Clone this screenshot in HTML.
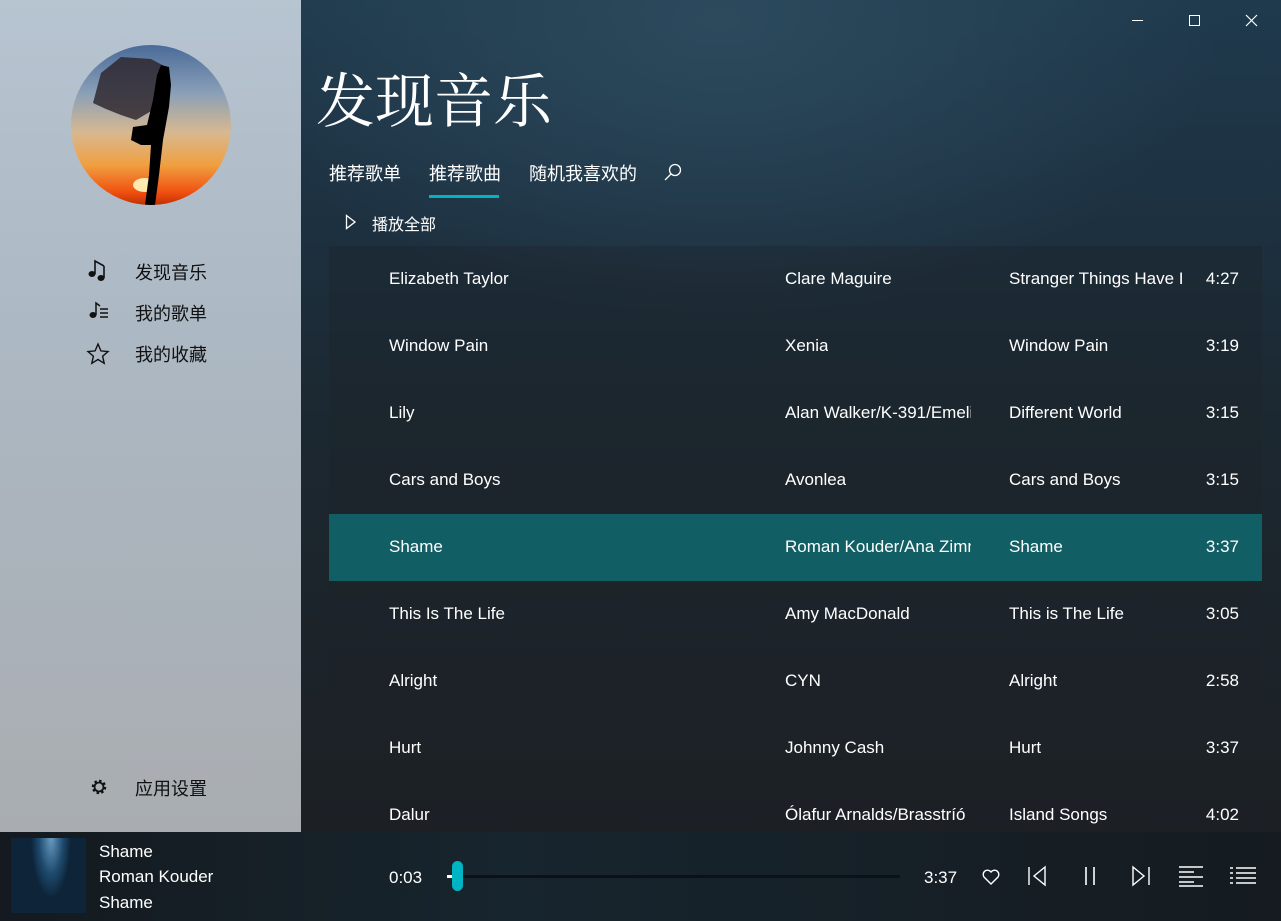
<!DOCTYPE html>
<html><head><meta charset="utf-8"><style>
*{margin:0;padding:0;box-sizing:border-box}
body{width:1281px;height:921px;overflow:hidden;position:relative;font-family:"Liberation Sans","Noto Sans CJK SC",sans-serif;background:#1c2126}
.side{position:absolute;left:0;top:0;width:301px;height:832px;background:linear-gradient(180deg,#b7c4d1 0%,#acb8c3 40%,#a9adb1 100%)}
.main{position:absolute;left:301px;top:0;width:980px;height:832px;background:radial-gradient(ellipse 500px 300px at 420px 20px,#2c4a5d 0%,rgba(30,56,75,0) 100%),linear-gradient(180deg,#1f3a4d 0%,#1d3141 25%,#1c2831 50%,#1c2024 100%)}
.avatar{position:absolute;left:71px;top:45px;width:160px;height:160px;border-radius:50%;background:linear-gradient(180deg,#4a6a98 0%,#8aa0b8 30%,#d8b890 55%,#f0a040 75%,#f05010 92%,#c03000 100%);overflow:hidden}
.nav{position:absolute;left:135px;font-size:18px;color:#111}
.ic{position:absolute;left:86px}
h1{position:absolute;left:316px;top:54px;font-family:"Noto Serif CJK SC",serif;font-weight:400;font-size:59px;color:#fff}
.tab{position:absolute;top:160px;font-size:18px;color:#fff}
.row{position:absolute;left:329px;width:933px;height:67px;color:#fff;font-size:17px}
.row span{position:absolute;top:23px;white-space:nowrap;overflow:hidden}
.row span.t{right:23px;text-align:right}
.bar{position:absolute;left:0;top:832px;width:1281px;height:89px;background:linear-gradient(90deg,#141a1f,#17252e 40%,#151b20 100%)}
.bt{position:absolute;color:#fff;font-size:17px}
</style></head><body>
<div class="side">
<div class="avatar"><svg width="160" height="160"><ellipse cx="74" cy="140" rx="12" ry="7" fill="#fff8c0" opacity=".9"/><path d="M22 58 L30 28 L50 12 L80 14 L95 22 L92 40 L82 65 L65 75 L50 70 L35 64Z" fill="#2a2228" opacity=".8"/><path d="M90 20 L98 22 L100 40 L98 62 L92 95 L88 130 L84 160 L74 160 L78 130 L80 100 L70 100 L60 95 L62 82 L76 80 L82 55 L86 30Z" fill="#000"/></svg></div>
<svg class="ic" style="top:258px" width="24" height="24"><ellipse cx="6" cy="16" rx="3.5" ry="3" fill="#111"/><ellipse cx="15" cy="20" rx="3.5" ry="3" fill="#111"/><path d="M9 16V3l9 5M18 20V8" stroke="#111" stroke-width="1.6" fill="none"/></svg>
<div class="nav" style="top:259px">发现音乐</div>
<svg class="ic" style="top:300px" width="24" height="22"><ellipse cx="7" cy="15" rx="3.5" ry="3" fill="#111"/><path d="M10 15V3l4 3M14 9h8M14 13h8M14 17h8" stroke="#111" stroke-width="1.5" fill="none"/></svg>
<div class="nav" style="top:300px">我的歌单</div>
<svg class="ic" style="top:342px" width="24" height="24"><path d="M12 2l2.9 6.9 7.1.6-5.4 4.7 1.6 7.1L12 17.5 5.8 21.3l1.6-7.1L2 9.5l7.1-.6Z" fill="none" stroke="#111" stroke-width="1.4"/></svg>
<div class="nav" style="top:341px">我的收藏</div>
<svg class="ic" style="top:777px;left:89px" width="20" height="20"><circle cx="10" cy="10" r="5.5" fill="none" stroke="#111" stroke-width="3.5" stroke-dasharray="2.2 2.1"/><circle cx="10" cy="10" r="4.5" fill="none" stroke="#111" stroke-width="1.8"/></svg>
<div class="nav" style="top:775px">应用设置</div>
</div>
<div class="main"></div>
<div style="position:absolute;left:1132px;top:20px;width:11px;height:1px;background:#fff"></div>
<div style="position:absolute;left:1189px;top:15px;width:11px;height:11px;border:1px solid #fff"></div>
<svg style="position:absolute;left:1245px;top:14px" width="13" height="13" stroke="#fff" stroke-width="1.2"><path d="M1 1L12 12M12 1L1 12"/></svg>
<h1>发现音乐</h1>
<div class="tab" style="left:329px">推荐歌单</div>
<div class="tab" style="left:429px">推荐歌曲</div>
<div style="position:absolute;left:429px;top:195px;width:70px;height:3px;background:#00b4c4"></div>
<div class="tab" style="left:529px">随机我喜欢的</div>
<svg style="position:absolute;left:663px;top:162px" width="20" height="20"><circle cx="12" cy="8" r="5.5" fill="none" stroke="#fff" stroke-width="1.3"/><path d="M8 12L2 18" stroke="#fff" stroke-width="1.3"/></svg>
<svg style="position:absolute;left:345px;top:214px" width="12" height="16"><path d="M1.5 1.5L10 8 1.5 14.5Z" fill="none" stroke="#fff" stroke-width="1.3"/></svg>
<div style="position:absolute;left:372px;top:211px;color:#fff;font-size:16px">播放全部</div>
<div style="position:absolute;left:329px;top:246px;width:933px;height:586px;background:rgba(30,35,40,.35)"></div>
<div class="row" style="top:246px"><span style="left:60px">Elizabeth Taylor</span><span style="left:456px">Clare Maguire</span><span style="left:680px;width:175px">Stranger Things Have I</span><span class="t">4:27</span></div>
<div class="row" style="top:313px"><span style="left:60px">Window Pain</span><span style="left:456px">Xenia</span><span style="left:680px">Window Pain</span><span class="t">3:19</span></div>
<div class="row" style="top:380px"><span style="left:60px">Lily</span><span style="left:456px;width:186px">Alan Walker/K-391/Emelie</span><span style="left:680px">Different World</span><span class="t">3:15</span></div>
<div class="row" style="top:447px"><span style="left:60px">Cars and Boys</span><span style="left:456px">Avonlea</span><span style="left:680px">Cars and Boys</span><span class="t">3:15</span></div>
<div class="row" style="top:514px;background:#115e64"><span style="left:60px">Shame</span><span style="left:456px;width:186px">Roman Kouder/Ana Zimmer</span><span style="left:680px">Shame</span><span class="t">3:37</span></div>
<div class="row" style="top:581px"><span style="left:60px">This Is The Life</span><span style="left:456px">Amy MacDonald</span><span style="left:680px">This is The Life</span><span class="t">3:05</span></div>
<div class="row" style="top:648px"><span style="left:60px">Alright</span><span style="left:456px">CYN</span><span style="left:680px">Alright</span><span class="t">2:58</span></div>
<div class="row" style="top:715px"><span style="left:60px">Hurt</span><span style="left:456px">Johnny Cash</span><span style="left:680px">Hurt</span><span class="t">3:37</span></div>
<div class="row" style="top:782px;height:50px;overflow:hidden"><span style="left:60px">Dalur</span><span style="left:456px;width:186px">Ólafur Arnalds/Brasstríó</span><span style="left:680px">Island Songs</span><span class="t">4:02</span></div>
<div class="bar"></div>
<div style="position:absolute;left:11px;top:838px;width:75px;height:75px;background:radial-gradient(ellipse 20px 60px at 40px 0,#6a9ac0,#1e4a6e 60%,#0e2438)"></div>
<div class="bt" style="left:99px;top:842px">Shame</div>
<div class="bt" style="left:99px;top:867px">Roman Kouder</div>
<div class="bt" style="left:99px;top:893px">Shame</div>
<div class="bt" style="left:389px;top:868px">0:03</div>
<div style="position:absolute;left:447px;top:875px;width:453px;height:3px;background:#0b1217"></div>
<div style="position:absolute;left:447px;top:875px;width:8px;height:3px;background:#fff"></div>
<div style="position:absolute;left:452px;top:861px;width:11px;height:30px;border-radius:6px;background:#00b4c4"></div>
<div class="bt" style="left:924px;top:868px">3:37</div>
<svg style="position:absolute;left:980px;top:866px" width="22" height="22" fill="none" stroke="#fff" stroke-width="1.4"><path d="M11 18L4 11a4 4 0 0 1 7-5 4 4 0 0 1 7 5Z"/></svg>
<svg style="position:absolute;left:1026px;top:864px" width="24" height="24" fill="none" stroke="#fff" stroke-width="1.4"><path d="M3 3v18M19 3L8 12l11 9Z"/></svg>
<svg style="position:absolute;left:1080px;top:864px" width="20" height="24" stroke="#fff" stroke-width="1.6"><path d="M6 3v18M14 3v18"/></svg>
<svg style="position:absolute;left:1128px;top:864px" width="24" height="24" fill="none" stroke="#fff" stroke-width="1.4"><path d="M21 3v18M5 3l11 9-11 9Z"/></svg>
<svg style="position:absolute;left:1178px;top:864px" width="26" height="24" stroke="#fff" stroke-width="1.6"><path d="M1 3h24M1 8h15M1 13h24M1 18h15M1 22h24"/></svg>
<svg style="position:absolute;left:1229px;top:864px" width="28" height="24" stroke="#fff" stroke-width="1.6"><path d="M1 4h3M7 4h20M1 9h3M7 9h20M1 14h3M7 14h20M1 19h3M7 19h20"/></svg>
</body></html>
